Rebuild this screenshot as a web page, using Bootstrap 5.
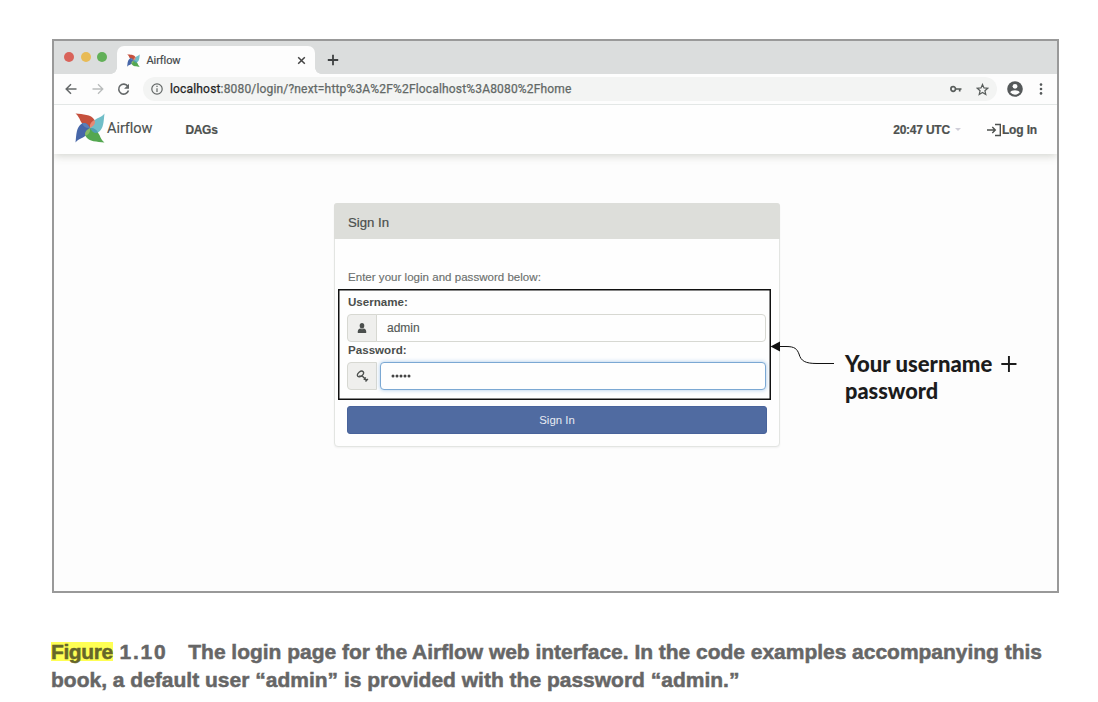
<!DOCTYPE html>
<html lang="en">
<head>
<meta charset="utf-8">
<meta name="viewport" content="width=device-width, initial-scale=1">
<title>Airflow – Sign In</title>
<link href="https://cdn.jsdelivr.net/npm/bootstrap@5.3.0/dist/css/bootstrap.min.css" rel="stylesheet">
<style>
body{background:#fff;color:#4a4e4c;font-family:"Liberation Sans",Arial,sans-serif;font-size:12px;line-height:16px;overflow:hidden}
svg{display:block;flex:none}
.figure-page{padding:39px 39px 0 52px}
.browser{width:1007px;height:554px;border:2px solid #999;background:#fdfdfd}
.tabstrip{height:33px;background:#dbdddd;padding:5px 0 0 10px}
.dot{width:10px;height:10px;border-radius:50%;margin-right:6.5px;margin-top:6px}
.dot-r{background:#d9635a}.dot-y{background:#e8bb56}.dot-g{background:#62b058}
.tab{width:198px;height:28px;background:#fdfdfd;border-radius:7px 7px 0 0;margin-left:3px;padding:0 9px 0 10px;font:500 11px/28px Roboto,sans-serif;color:#454a4c;position:relative}
.tab::before,.tab::after{content:"";position:absolute;bottom:0;width:6px;height:6px}
.tab::before{left:-6px;background:radial-gradient(circle at 0 0,transparent 5.5px,#fdfdfd 6px)}
.tab::after{right:-6px;background:radial-gradient(circle at 100% 0,transparent 5.5px,#fdfdfd 6px)}
.tab-title{margin:1px 0 0 7px;font-weight:400;font-size:11px;-webkit-text-stroke:.2px #454a4c;letter-spacing:-.1px}
.new-tab{margin:8px 0 0 12px}
.toolbar{height:31px;border-bottom:1px solid #e3e7e6;padding:0 0 0 11px}
.omnibox{height:24px;width:854px;border-radius:12px;background:#f3f4f3;margin-left:13px;padding:0 8px 0 8px;font:400 12px/24px Roboto,sans-serif;color:#626866}
.url{letter-spacing:.17px;white-space:nowrap;margin-left:7px;-webkit-text-stroke:.25px currentColor}
.url b{font-weight:400;color:#222}
.site-nav{height:49px;padding:0 20px 0 21px;background:#fefefe;box-shadow:0 2px 8px rgba(90,95,75,.25);font-weight:700;font-size:12px;color:#4d514f;clip-path:inset(0 0 -12px 0)}
.brand-name{font:400 14.5px/20px Roboto,sans-serif;color:#4d514f;letter-spacing:-.05px;margin:-2px 0 0 2px;-webkit-text-stroke:.15px #4d514f}
.nav-item-dags{margin-left:33px;letter-spacing:-.3px}
.clock{letter-spacing:-.22px}
.log-in{letter-spacing:-.15px}
.site-nav,.clock,.log-in,.nav-item-dags{-webkit-text-stroke:.2px #4d514f}
.stage{padding-top:49px;padding-left:280px}
.login{width:446px;height:244px;border:1px solid #e3e5e2;border-radius:4px;background:#fefefe;box-shadow:0 1px 2px rgba(0,0,0,.05);position:relative}
.login-head{height:36px;background:#dddeda;font-size:13.2px;line-height:39px;padding:0 14px;border-radius:3px 3px 0 0;color:#4b4f4d;margin:-1px -1px 0;-webkit-text-stroke:.2px #4b4f4d}
.intro{font-size:11.5px;line-height:16px;padding:30px 13px 0;color:#6c706e;letter-spacing:.03px;-webkit-text-stroke:.15px #6c706e}
.callout-box{margin:4px 0 0 3px;width:433px;height:111px;border:1px solid #111;box-shadow:inset 0 0 0 .5px #111;padding:4px 4px 0 8px}
.callout-box label{display:block;font-weight:700;font-size:11.6px;line-height:16px;height:20px;padding-left:1px}
.callout-box .input-group{height:28px;width:419px}
.input-group-text,.form-control{font-size:12px;line-height:16px;padding:0;border-color:#d7d8d2;border-radius:4px}
.input-group-text{width:30px;background:#efefed;justify-content:center;color:#4b4f4d}
.form-control{padding:0 10px;color:#555957;background:#fefefe;-webkit-text-stroke:.15px #555957}
.active-field{border:1px solid #7ba8d3!important;box-shadow:0 0 4px rgba(110,165,220,.6);border-radius:4px!important;margin-left:3px!important}
.signin{display:block;width:420px;height:28px;margin:6px 0 0 12px;padding:0;font-size:11.4px;line-height:27px;background:#506ba1;border:1px solid #48639b;border-radius:3px;color:#e8ecf3}
.arrow{position:absolute;left:434px;top:135px}
.note{position:absolute;left:510px;top:146px;font:900 22.8px/27px Lato,sans-serif;color:#1c1c1c;white-space:nowrap}
.note span{display:block;transform-origin:0 50%}
.note-a{transform:scaleX(.97)}
.note-b{transform:scaleX(.955)}
.plus-icon{display:inline-block;margin:-5px 0 0 4px}
.caption{font-weight:700;font-size:21px;line-height:28px;color:#666;margin:45px 0 0 -1px;-webkit-text-stroke:.5px #666;white-space:nowrap}
.caption .hl{background:#ffff54;color:#66662a;-webkit-text-stroke-color:#66662a;line-height:19px;display:inline-block;letter-spacing:-.4px}
.num{margin:0 21px 0 1px;letter-spacing:1.7px}
.line-a{letter-spacing:-.025px}
</style>
<script src="https://cdn.jsdelivr.net/npm/bootstrap@5.3.0/dist/js/bootstrap.bundle.min.js"></script>
</head>
<body>
<svg width="0" height="0" class="position-absolute">
  <defs>
    <symbol id="pinwheel" viewBox="0 0 30 30">
      <path d="M.5 .5C8 1.500 16 1 19.500 7C21 10 19 13 15 15C10 14 7 11 5.500 8C4.300 5 3 2.500 .5 .5Z" fill="#c5503d"/>
      <path d="M.5 .5C8 1.500 16 1 19.500 7C21 10 19 13 15 15C10 14 7 11 5.500 8C4.300 5 3 2.500 .5 .5Z" fill="#70bec8" transform="rotate(90 15 15)"/>
      <path d="M.5 .5C8 1.500 16 1 19.500 7C21 10 19 13 15 15C10 14 7 11 5.500 8C4.300 5 3 2.500 .5 .5Z" fill="#54a750" transform="rotate(180 15 15)"/>
      <path d="M.5 .5C8 1.500 16 1 19.500 7C21 10 19 13 15 15C10 14 7 11 5.500 8C4.300 5 3 2.500 .5 .5Z" fill="#4666a8" transform="rotate(270 15 15)"/>
      <path d="M15 15C14.500 11 16 9 19.500 7C21 10 19 13 15 15Z" fill="#e58a75"/>
      <path d="M15 15C19 14.500 21 16 23 19.500C20 21 17 19 15 15Z" fill="#4f9eb1"/>
      <path d="M15 15C15.500 19 14 21 10.500 23C9 20 11 17 15 15Z" fill="#88bb67"/>
      <path d="M15 15C11 15.500 9 14 7 10.500C10 9 13 11 15 15Z" fill="#5b7fb8"/>
    </symbol>
  </defs>
</svg>
<main class="figure-page">
  <section class="browser">
    <div class="tabstrip d-flex">
      <i class="dot dot-r"></i><i class="dot dot-y"></i><i class="dot dot-g"></i>
      <div class="tab d-flex align-items-center">
        <svg width="13" height="13"><use href="#pinwheel"/></svg>
        <span class="tab-title">Airflow</span>
        <svg class="ms-auto" width="9" height="9" viewBox="0 0 9 9" fill="none" stroke="#444" stroke-width="1.500"><path d="M1.200 1.200l6.600 6.600M7.800 1.200L1.200 7.800"/></svg>
      </div>
      <svg class="new-tab" width="12" height="12" viewBox="0 0 12 12" fill="none" stroke="#3e4142" stroke-width="1.800"><path d="M6 .8v10.400M.8 6h10.400"/></svg>
    </div>
    <div class="toolbar d-flex align-items-center">
      <svg width="12" height="12" viewBox="0 0 12 12" fill="none" stroke="#65696a" stroke-width="1.500"><path d="M11.500 6H1.500M6 1.200L1.200 6L6 10.800"/></svg>
      <svg width="12" height="12" viewBox="0 0 12 12" fill="none" stroke="#b9bcbc" stroke-width="1.300" style="margin-left:15px"><path d="M.5 6h10M6 1.200L10.800 6L6 10.800"/></svg>
      <svg width="13" height="13" viewBox="0 0 13 13" style="margin-left:13px"><path d="M10.800 3.200A5 5 0 1 0 11.500 7.600" fill="none" stroke="#65696a" stroke-width="1.600"/><path d="M12 .8V5.700H7.100Z" fill="#65696a"/></svg>
      <div class="omnibox d-flex align-items-center">
        <svg width="12" height="12" viewBox="0 0 12 12" fill="none" stroke="#626766" stroke-width="1.200"><circle cx="6" cy="6" r="5.200"/><path d="M6 5.200V9M6 2.800v1.300"/></svg>
        <span class="url"><b>localhost</b>:8080/login/?next=http%3A%2F%2Flocalhost%3A8080%2Fhome</span>
        <svg class="ms-auto" width="12" height="8" viewBox="0 0 12 8" fill="none" stroke="#585d5b" stroke-width="1.700"><circle cx="3.200" cy="4" r="2.300"/><path d="M5.500 4H11.500M9.700 4v2.600"/></svg>
        <svg width="13" height="13" viewBox="0 0 13 13" fill="none" stroke="#585d5b" stroke-width="1.200" style="margin-left:14px"><path d="M6.500 1.400L8 4.900L11.800 5.200L8.900 7.700L9.800 11.500L6.500 9.500L3.200 11.500L4.100 7.700L1.200 5.200L5 4.900Z"/></svg>
      </div>
      <svg width="16" height="16" viewBox="0 0 16 16" style="margin-left:10px"><circle cx="8" cy="8" r="7.800" fill="#55595a"/><circle cx="8" cy="5.300" r="2.400" fill="#fdfdfd"/><path d="M3.200 11.300Q4 9.200 8 9.200T12.800 11.300Q11 13.700 8 13.700T3.200 11.300Z" fill="#fdfdfd"/></svg>
      <svg width="4" height="12" viewBox="0 0 4 12" fill="#55595a" style="margin-left:16px"><circle cx="2" cy="1.600" r="1.300"/><circle cx="2" cy="6" r="1.300"/><circle cx="2" cy="10.400" r="1.300"/></svg>
    </div>
    <nav class="site-nav d-flex align-items-center">
      <svg width="30" height="30" style="margin-top:-4px"><use href="#pinwheel"/></svg>
      <span class="brand-name">Airflow</span>
      <span class="nav-item-dags">DAGs</span>
      <span class="ms-auto clock">20:47 UTC</span>
      <svg width="6" height="3" viewBox="0 0 6 3" style="margin-left:5px"><path d="M0 0h6L3 3Z" fill="#cfced8"/></svg>
      <svg width="15" height="14" viewBox="0 0 15 14" fill="none" stroke="#4d514f" stroke-width="1.400" style="margin-left:26px"><path d="M0 7H8M5.300 4L8.300 7L5.300 10M8 1.500H13.300V12.500H8"/></svg>
      <span class="log-in">Log In</span>
    </nav>
    <div class="stage">
      <div class="login">
        <div class="login-head">Sign In</div>
        <div class="intro">Enter your login and password below:</div>
        <div class="callout-box">
          <label>Username:</label>
          <div class="input-group">
            <span class="input-group-text"><svg width="10" height="10" viewBox="0 0 10 10" fill="#4b4f4d"><ellipse cx="5" cy="2.800" rx="2.300" ry="2.800"/><path d="M.8 10Q.3 6 3.200 5.400Q5 7 6.800 5.400Q9.700 6 9.200 10Z"/></svg></span>
            <span class="form-control d-flex align-items-center">admin</span>
          </div>
          <label>Password:</label>
          <div class="input-group">
            <span class="input-group-text"><svg width="13" height="12" viewBox="0 0 13 12" fill="none" stroke="#4b4f4d"><ellipse cx="4.500" cy="4" rx="3.500" ry="2.200" transform="rotate(-40 4.500 4)" stroke-width="1.300"/><path d="M3 6.200H6.500L11 11M7.800 9.800L9.900 7.500M9.500 11.500L12 8.900" stroke-width="1.300"/></svg></span>
            <span class="form-control active-field d-flex align-items-center"><svg width="20" height="4" viewBox="0 0 20 4" fill="#444"><circle cx="2" cy="2" r="1.500"/><circle cx="6" cy="2" r="1.500"/><circle cx="10" cy="2" r="1.500"/><circle cx="14" cy="2" r="1.500"/><circle cx="18" cy="2" r="1.500"/></svg></span>
          </div>
        </div>
        <button class="btn signin" type="button">Sign In</button>
        <svg class="arrow" width="68" height="30" viewBox="0 0 68 30" fill="none"><path d="M10 7.500H17C26 7.500 28 10 30 15C32 22 36 24.500 48 24.500H65" stroke="#111" stroke-width="1"/><path d="M1.500 7.500L11 2.500V12.500Z" fill="#111"/></svg>
        <div class="note"><span class="note-a">Your username <svg class="plus-icon" width="16" height="16" viewBox="0 0 16 16" stroke="#1c1c1c" stroke-width="2"><path d="M8 0V16M0 8H16"/></svg></span><span class="note-b">password</span></div>
      </div>
    </div>
  </section>
  <div class="caption"><div class="line-a"><span class="hl">Figure</span> <span class="num">1.10</span>The login page for the Airflow web interface. In the code examples accompanying this</div><div class="line-b">book, a default user “admin” is provided with the password “admin.”</div></div>
</main>
</body>
</html>
